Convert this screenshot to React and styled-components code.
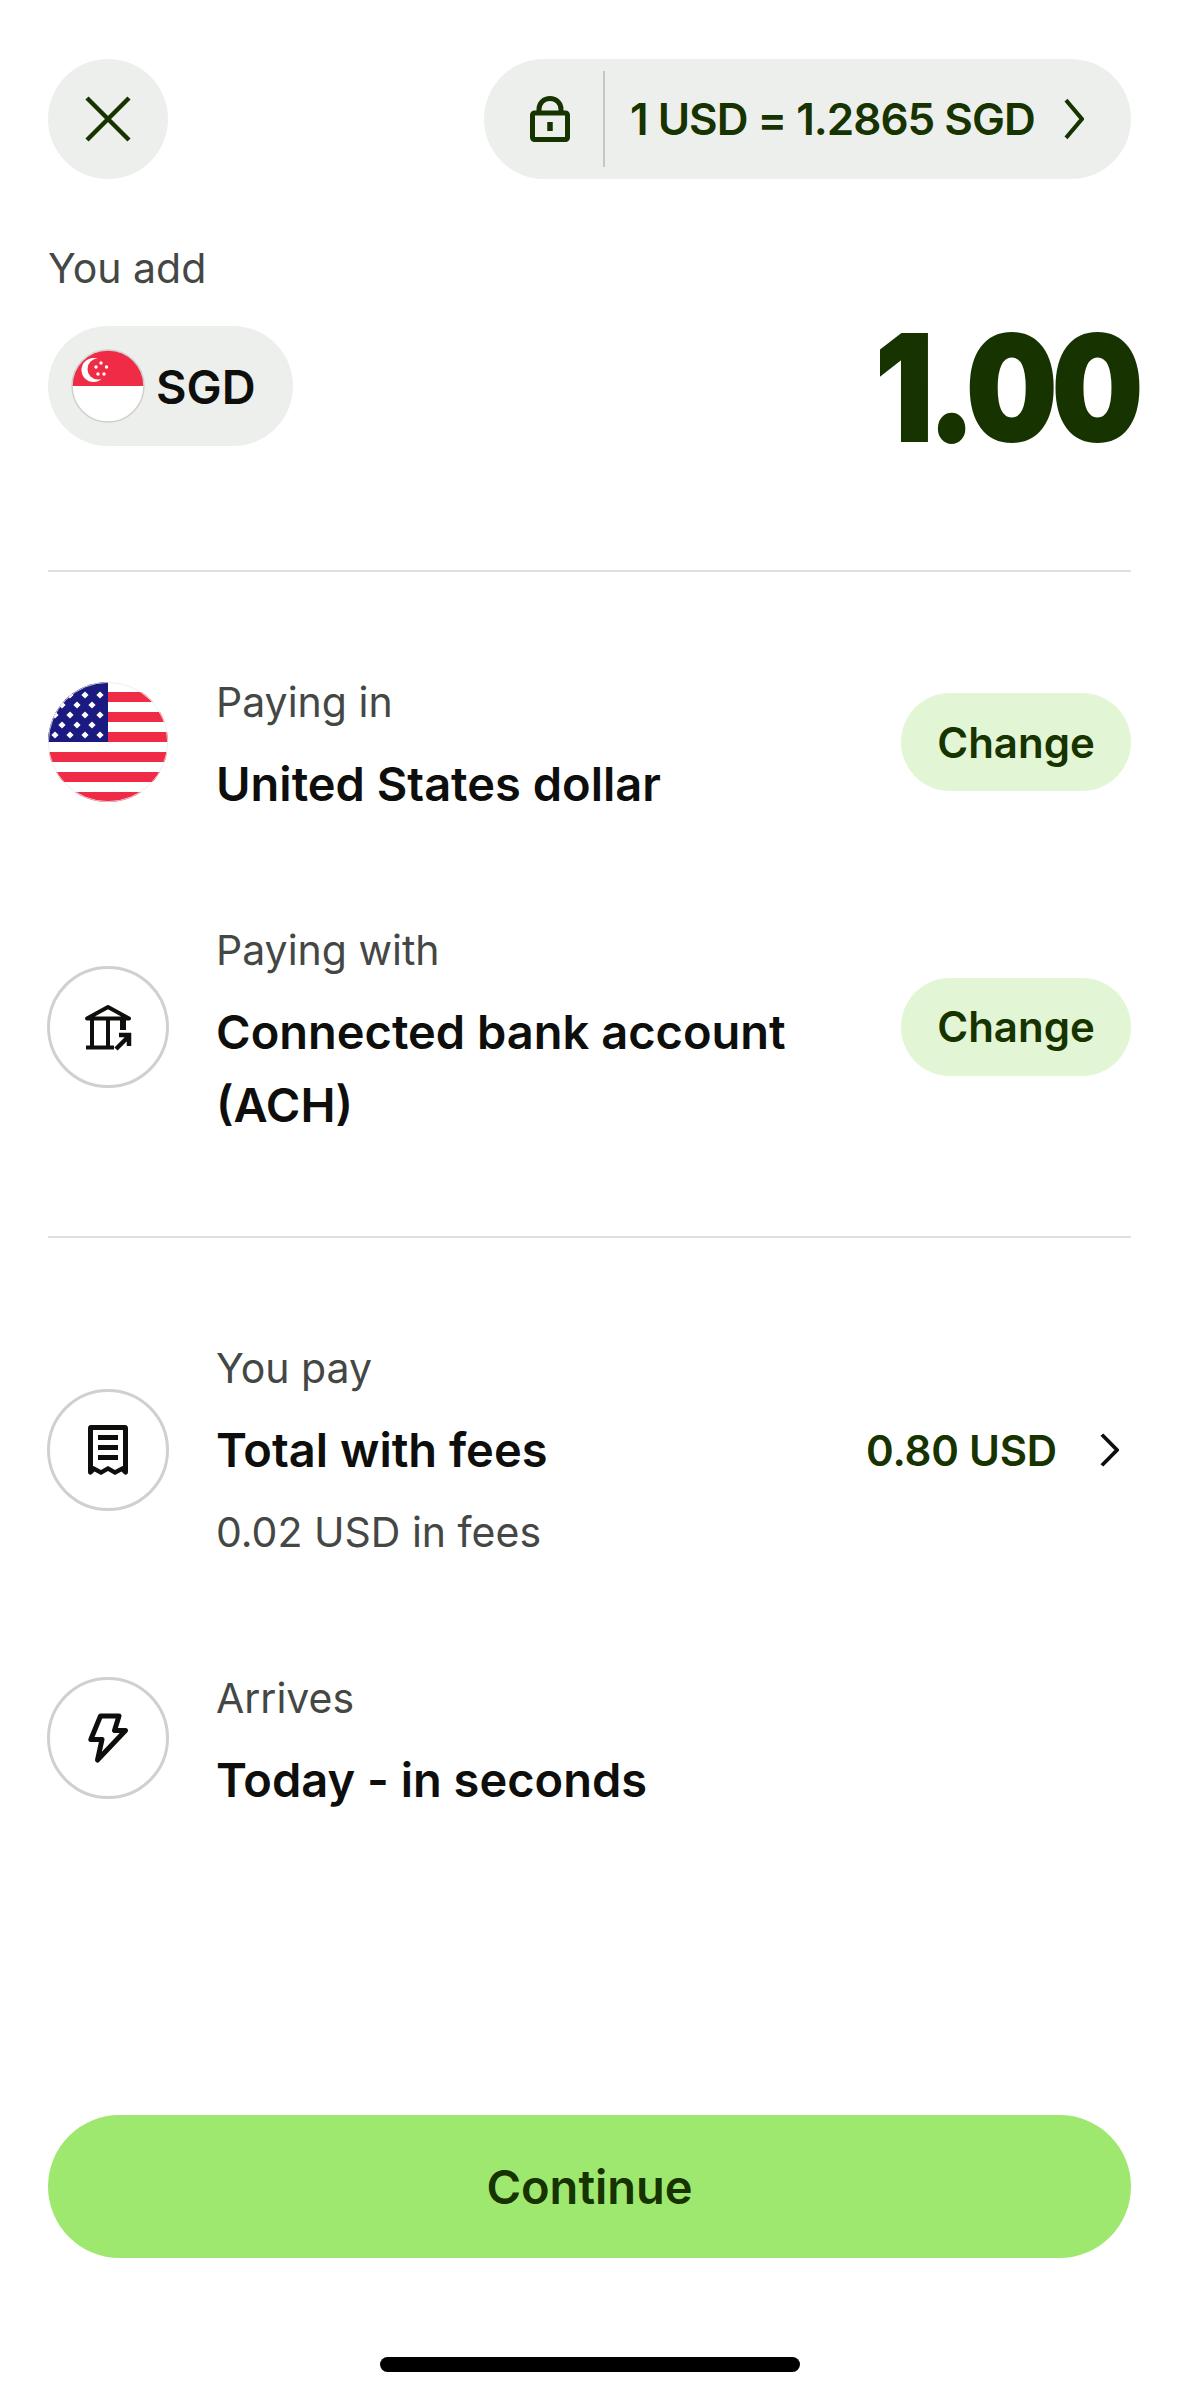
import React from 'react'
import styled, { createGlobalStyle } from 'styled-components'

const GlobalStyle = createGlobalStyle`
  html, body { margin: 0; padding: 0; background: #fff; }
  * { box-sizing: border-box; }
  body { font-family: Inter, "Liberation Sans", sans-serif; -webkit-font-smoothing: antialiased; }
`

const Page = styled.div`
  width: 1179px;
  height: 2396px;
  padding: 59px 48px 0;
  display: flex;
  flex-direction: column;
  overflow: hidden;
`
const TopBar = styled.div`
  display: flex;
  justify-content: space-between;
  align-items: center;
`
const CloseButton = styled.div`
  width: 120px;
  height: 120px;
  border-radius: 50%;
  background: #edefec;
  display: flex;
  align-items: center;
  justify-content: center;
`
const RatePill = styled.div`
  width: 647px;
  height: 120px;
  border-radius: 60px;
  background: #edefec;
  display: flex;
  align-items: center;
`
const LockBox = styled.div`
  width: 121px;
  height: 96px;
  display: flex;
  align-items: center;
  justify-content: center;
  border-right: 2px solid #c4c7c2;
  padding-left: 13px;
`
const RateText = styled.div`
  margin-left: 25px;
  font-size: 44px;
  font-weight: 600;
  letter-spacing: -1px;
  color: #163300;
  white-space: nowrap;
  flex: 1;
`
const RateChevron = styled.div`
  width: 67px;
  display: flex;
  align-items: center;
`
const AddLabel = styled.div`
  margin-top: 64px;
  font-size: 41px;
  line-height: 50px;
  color: #454745;
`
const AmountRow = styled.div`
  margin-top: 33px;
  display: flex;
  justify-content: space-between;
  align-items: center;
  height: 120px;
`
const CurrencyPill = styled.div`
  height: 120px;
  width: 245px;
  border-radius: 60px;
  background: #edefec;
  display: flex;
  align-items: center;
  padding-left: 23px;
  gap: 11px;
`
const CurrencyCode = styled.span`
  font-size: 47px;
  font-weight: 600;
  color: #0e0f0c;
`
const Amount = styled.div`
  font-size: 147px;
  font-weight: 900;
  line-height: 120px;
  letter-spacing: -6px;
  padding-top: 4px;
  color: #163300;
  margin-right: -7px;
  -webkit-text-stroke: 2px #163300;
  transform: scaleX(0.87);
  transform-origin: right center;
`
const Divider = styled.div`
  height: 2px;
  background: #dfe0de;
  margin-top: ${p => p.$top}px;
`
const Row = styled.div`
  display: flex;
  align-items: center;
  margin-top: ${p => p.$top}px;
`
const IconCircle = styled.div`
  width: 122px;
  height: 122px;
  margin: 0 -1px;
  border-radius: 50%;
  border: 3px solid #d0d0ce;
  display: flex;
  align-items: center;
  justify-content: center;
  flex-shrink: 0;
`
const RowText = styled.div`
  margin-left: 48px;
  flex: 1;
  min-width: 0;
`
const Label = styled.div`
  font-size: 41px;
  line-height: 50px;
  color: #454745;
`
const Title = styled.div`
  font-size: 47px;
  font-weight: 600;
  line-height: 73px;
  color: #0e0f0c;
  margin-top: 20px;
  margin-bottom: -13px;
  max-width: 600px;
`
const Sub = styled.div`
  font-size: 41px;
  line-height: 50px;
  color: #454745;
  margin-top: 34px;
`
const ChangeButton = styled.div`
  width: 230px;
  height: 98px;
  border-radius: 49px;
  background: #e2f6d5;
  color: #163300;
  font-size: 42px;
  font-weight: 600;
  display: flex;
  align-items: center;
  justify-content: center;
  flex-shrink: 0;
`
const PriceLink = styled.div`
  display: flex;
  align-items: center;
  gap: 43px;
  padding-right: 12px;
  font-size: 42px;
  font-weight: 600;
  letter-spacing: -0.2px;
  color: #163300;
  white-space: nowrap;
`
const Footer = styled.div`
  margin-top: auto;
  padding-bottom: 24px;
  display: flex;
  flex-direction: column;
  align-items: center;
`
const ContinueButton = styled.div`
  width: 100%;
  height: 143px;
  border-radius: 72px;
  background: #9fe870;
  color: #163300;
  font-size: 47px;
  font-weight: 600;
  display: flex;
  align-items: center;
  justify-content: center;
`
const HomeBar = styled.div`
  width: 420px;
  height: 15px;
  border-radius: 8px;
  background: #000;
  margin-top: 99px;
`

const UsFlag = () => {
  const rows = [
    [13, [22, 37, 52]],
    [23, [14, 29, 44]],
    [33, [7, 22, 37, 52]],
    [43, [14, 29, 44]],
    [53, [7, 22, 37, 52]],
  ]
  return (
    <svg width="120" height="120" viewBox="0 0 120 120">
      <defs>
        <clipPath id="usClip"><circle cx="60" cy="60" r="60" /></clipPath>
      </defs>
      <g clipPath="url(#usClip)">
        <rect width="120" height="120" fill="#fff" />
        {[10, 30, 50, 70, 90, 110].map(y => (
          <rect key={y} x="0" y={y} width="120" height="10" fill="#f02b45" />
        ))}
        <rect width="60" height="60" fill="#1a1a80" />
        {rows.map(([y, xs]) => xs.map(x => (
          <path key={x + '-' + y} d={`M${x} ${y - 3.6}L${x + 3.6} ${y}L${x} ${y + 3.6}L${x - 3.6} ${y}Z`} fill="#fff" />
        )))}
      </g>
      <circle cx="60" cy="60" r="59.6" fill="none" stroke="#e8e8e8" strokeWidth="0.8" />
    </svg>
  )
}

const SgFlag = () => (
  <svg width="74" height="74" viewBox="0 0 74 74">
    <defs>
      <clipPath id="sgClip"><circle cx="37" cy="37" r="36" /></clipPath>
    </defs>
    <g clipPath="url(#sgClip)">
      <rect width="74" height="74" fill="#fff" />
      <rect width="74" height="37" fill="#f02b45" />
      <circle cx="22.5" cy="21" r="12" fill="#fff" />
      <circle cx="27" cy="20" r="10.5" fill="#f02b45" />
      {[[30, 14], [25, 18], [35.5, 18], [27, 25], [33, 25]].map(([x, y]) => (
        <circle key={x + '-' + y} cx={x} cy={y} r="1.7" fill="#fff" />
      ))}
    </g>
    <circle cx="37" cy="37" r="36" fill="none" stroke="#cfcfcd" strokeWidth="1.5" />
  </svg>
)

const CloseIcon = () => (
  <svg width="46" height="46" viewBox="0 0 46 46" fill="none" stroke="#163300" strokeWidth="4.5">
    <path d="M2 2L44 44M44 2L2 44" />
  </svg>
)

const LockIcon = () => (
  <svg width="40" height="46" viewBox="0 0 40 46" fill="none" stroke="#163300" strokeWidth="5">
    <rect x="2.5" y="17" width="35" height="26.5" rx="2" strokeLinejoin="round" />
    <path d="M9 16V13.5C9 7 14 2.5 20 2.5C26 2.5 31 7 31 13.5V16" />
    <path d="M20 26V35" strokeWidth="5.5" />
  </svg>
)

const Chevron = ({ w, h, color, width }) => (
  <svg width={w} height={h} viewBox="0 0 20 40" preserveAspectRatio="none" fill="none" stroke={color} strokeWidth={width}>
    <path d="M2 2L18 20L2 38" />
  </svg>
)

const BankIcon = () => (
  <svg width="48" height="48" viewBox="0 0 48 48" fill="none" stroke="#0e0f0c" strokeWidth="4">
    <path d="M3 15.5L24 4L45 15.5Z" strokeLinejoin="round" />
    <path d="M8 17V44M24 17V44" />
    <path d="M39 17V27" strokeWidth="6" />
    <path d="M2 44.5H30" />
    <path d="M32 46L45 33M35 32H45V43" strokeWidth="4.5" />
  </svg>
)

const ReceiptIcon = () => (
  <svg width="40" height="50" viewBox="0 0 40 50" fill="#0e0f0c">
    <path fillRule="evenodd" d="M3 0H37C38.7 0 40 1.3 40 3V47C40 49.5 37.5 50.5 36 49L33.5 46.5L27 50L20 46L13 50L6.5 46.5L4 49C2.5 50.5 0 49.5 0 47V3C0 1.3 1.3 0 3 0ZM5 5V41L6.5 41.5L13 45L20 41L27 45L33.5 41.5L35 41V5Z" />
    <path d="M10 10H30V15H10Z" />
    <path d="M10 20H30V25H10Z" />
    <path d="M10 30H30V35H10Z" />
  </svg>
)

const BoltIcon = () => (
  <svg width="40" height="50" viewBox="0 0 40 50" fill="none" stroke="#0e0f0c" strokeWidth="5" strokeLinejoin="round" strokeLinecap="round">
    <path d="M12.5 3H31L26.5 17.5H37.5L9.5 47L14 26.5H2.8Z" />
  </svg>
)

export default function App() {
  return (
    <>
      <GlobalStyle />
      <Page>
        <TopBar>
          <CloseButton><CloseIcon /></CloseButton>
          <RatePill>
            <LockBox><LockIcon /></LockBox>
            <RateText>1 USD = 1.2865 SGD</RateText>
            <RateChevron><Chevron w={20} h={42} color="#163300" width={4} /></RateChevron>
          </RatePill>
        </TopBar>

        <AddLabel>You add</AddLabel>
        <AmountRow>
          <CurrencyPill>
            <SgFlag />
            <CurrencyCode>SGD</CurrencyCode>
          </CurrencyPill>
          <Amount>1.00</Amount>
        </AmountRow>

        <Divider $top={124} />

        <Row $top={105}>
          <UsFlag />
          <RowText>
            <Label>Paying in</Label>
            <Title>United States dollar</Title>
          </RowText>
          <ChangeButton>Change</ChangeButton>
        </Row>

        <Row $top={118}>
          <IconCircle><BankIcon /></IconCircle>
          <RowText>
            <Label>Paying with</Label>
            <Title>Connected bank account (ACH)</Title>
          </RowText>
          <ChangeButton>Change</ChangeButton>
        </Row>

        <Divider $top={108} />

        <Row $top={105}>
          <IconCircle><ReceiptIcon /></IconCircle>
          <RowText>
            <Label>You pay</Label>
            <Title>Total with fees</Title>
            <Sub>0.02 USD in fees</Sub>
          </RowText>
          <PriceLink>
            0.80 USD
            <Chevron w={19} h={34} color="#0e0f0c" width={4} />
          </PriceLink>
        </Row>

        <Row $top={116}>
          <IconCircle><BoltIcon /></IconCircle>
          <RowText>
            <Label>Arrives</Label>
            <Title>Today - in seconds</Title>
          </RowText>
        </Row>

        <Footer>
          <ContinueButton>Continue</ContinueButton>
          <HomeBar />
        </Footer>
      </Page>
    </>
  )
}
